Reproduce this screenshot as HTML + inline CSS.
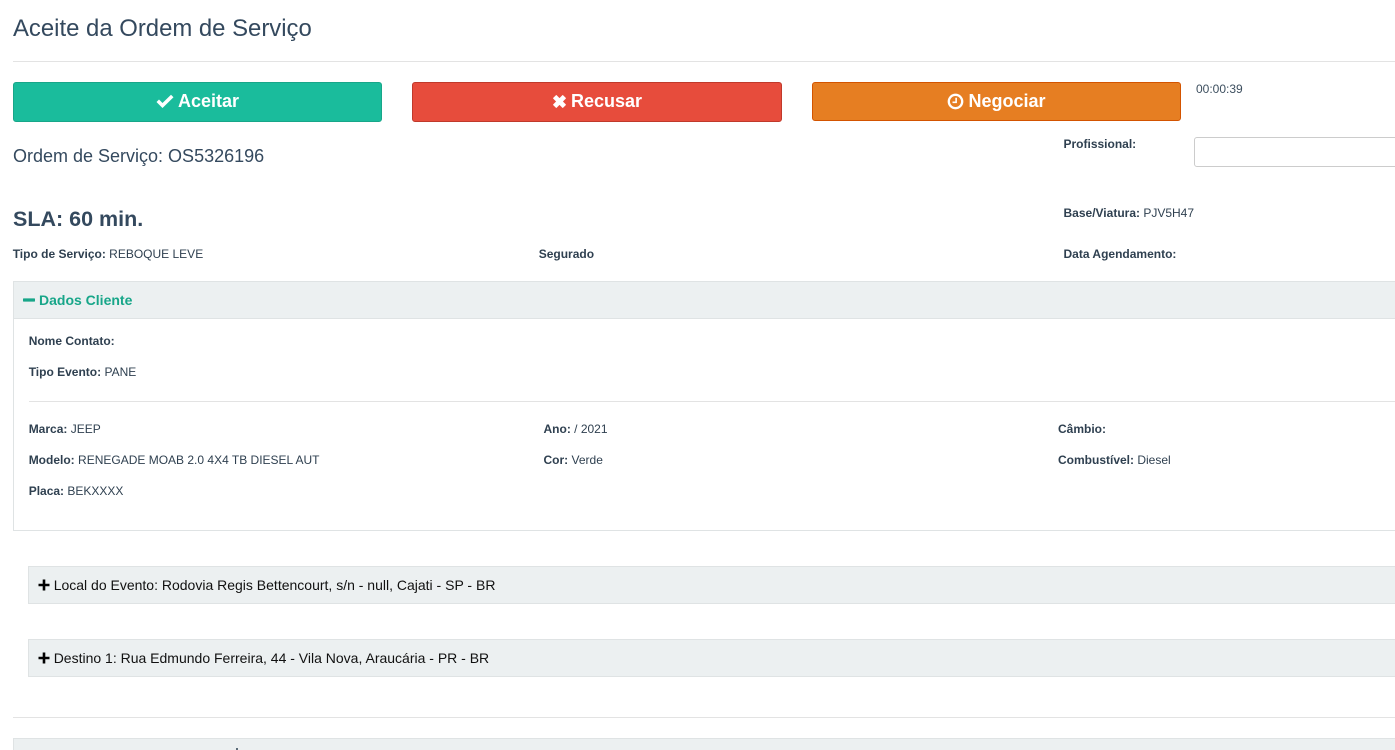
<!DOCTYPE html>
<html lang="pt-BR">
<head>
<meta charset="utf-8">
<title>Aceite da Ordem de Serviço</title>
<style>
html,body{margin:0;padding:0;width:1395px;height:750px;overflow:hidden;background:#fff}
body{font-family:"Liberation Sans",Arial,sans-serif;color:#2f4050;position:relative}
.a{position:absolute;white-space:nowrap}
.s{font-size:12px;line-height:16px}
b{font-weight:700}
.line{position:absolute;height:1px;background:#e3e3e3}
.btn{position:absolute;box-sizing:border-box;border-radius:3px;color:#fff;font-weight:700;font-size:18px;display:flex;align-items:center;justify-content:center;gap:4px;border-style:solid;border-width:1px;padding-bottom:2px}
.bar{position:absolute;box-sizing:border-box;background:#ecf0f1;border:1px solid #dfe3e4;right:-5px}
</style>
</head>
<body>
<div class="a" style="left:13px;top:15px;font-size:23.9px;line-height:28px;color:#34495e">Aceite da Ordem de Serviço</div>
<div class="line" style="left:13px;top:61px;width:1382px"></div>

<div class="btn" style="left:13px;top:82px;width:369px;height:40px;background:#1abc9c;border-color:#18a689">
<svg width="18" height="15" viewBox="0 0 18 15"><path d="M0.5 8 L3 5.5 L6.5 9 L15 0.8 L17.5 3.3 L6.5 14 Z" fill="#fff"/></svg><span>Aceitar</span></div>
<div class="btn" style="left:412px;top:82px;width:370px;height:40px;background:#e74c3c;border-color:#c0392b">
<svg width="15" height="15" viewBox="0 0 14 14"><path d="M1.5 4 L4 1.5 L7 4.5 L10 1.5 L12.5 4 L9.5 7 L12.5 10 L10 12.5 L7 9.5 L4 12.5 L1.5 10 L4.5 7 Z" fill="#fff" stroke="#fff" stroke-width="1" stroke-linejoin="round"/></svg><span>Recusar</span></div>
<div class="btn" style="left:812px;top:82px;width:369px;height:39px;background:#e67e22;border-color:#d35400;padding-bottom:0">
<svg width="17" height="17" viewBox="0 0 16 16"><circle cx="8" cy="8" r="6.3" fill="none" stroke="#fff" stroke-width="2.2"/><path d="M8.6 4.5 V8.8 H5.2" fill="none" stroke="#fff" stroke-width="1.5"/></svg><span>Negociar</span></div>

<div class="a s" style="left:1196px;top:81px;color:#3d4f5f">00:00:39</div>
<div class="a" style="left:13px;top:145px;font-size:18px;line-height:22px;color:#34495e">Ordem de Serviço: OS5326196</div>
<div class="a s" style="left:1063.5px;top:136px"><b>Profissional:</b></div>
<div class="a" style="left:1194px;top:137px;width:210px;height:30px;box-sizing:border-box;border:1px solid #ccc;border-radius:3px;background:#fff"></div>

<div class="a" style="left:13px;top:206px;font-size:21.5px;line-height:26px;color:#34495e"><b>SLA: 60 min.</b></div>
<div class="a s" style="left:1063.5px;top:205px"><b>Base/Viatura:</b> PJV5H47</div>
<div class="a s" style="left:12.7px;top:246px"><b>Tipo de Serviço:</b> REBOQUE LEVE</div>
<div class="a s" style="left:538.7px;top:246px"><b>Segurado</b></div>
<div class="a s" style="left:1063.5px;top:246px"><b>Data Agendamento:</b></div>

<div class="a" style="left:13px;top:281px;width:1392px;height:250px;box-sizing:border-box;border:1px solid #dfe3e4"></div>
<div class="bar" style="left:13px;top:281px;height:38px"></div>
<svg class="a" style="left:23px;top:298px" width="12" height="4" viewBox="0 0 12 4"><rect width="12" height="3.2" y=".4" rx=".6" fill="#18a689"/></svg>
<div class="a" style="left:39px;top:292px;font-size:14px;line-height:16px;color:#18a689"><b>Dados Cliente</b></div>

<div class="a s" style="left:28.7px;top:333px"><b>Nome Contato:</b></div>
<div class="a s" style="left:28.7px;top:364px"><b>Tipo Evento:</b> PANE</div>
<div class="line" style="left:29px;top:401px;width:1366px"></div>

<div class="a s" style="left:28.7px;top:421px"><b>Marca:</b> JEEP</div>
<div class="a s" style="left:28.7px;top:452px"><b>Modelo:</b> RENEGADE MOAB 2.0 4X4 TB DIESEL AUT</div>
<div class="a s" style="left:28.7px;top:483px"><b>Placa:</b> BEKXXXX</div>
<div class="a s" style="left:543.5px;top:421px"><b>Ano:</b> / 2021</div>
<div class="a s" style="left:543.5px;top:452px"><b>Cor:</b> Verde</div>
<div class="a s" style="left:1058px;top:421px"><b>Câmbio:</b></div>
<div class="a s" style="left:1058px;top:452px"><b>Combustível:</b> Diesel</div>

<div class="bar" style="left:28px;top:566px;height:38px"></div>
<svg class="a" style="left:38px;top:579px" width="12" height="12" viewBox="0 0 12 12"><path d="M4.7 0.5 H7.3 V4.7 H11.5 V7.3 H7.3 V11.5 H4.7 V7.3 H0.5 V4.7 H4.7 Z" fill="#000"/></svg>
<div class="a" style="left:53.7px;top:577px;font-size:14px;line-height:16px;color:#111">Local do Evento: Rodovia Regis Bettencourt, s/n - null, Cajati - SP - BR</div>

<div class="bar" style="left:28px;top:639px;height:38px"></div>
<svg class="a" style="left:38px;top:652px" width="12" height="12" viewBox="0 0 12 12"><path d="M4.7 0.5 H7.3 V4.7 H11.5 V7.3 H7.3 V11.5 H4.7 V7.3 H0.5 V4.7 H4.7 Z" fill="#000"/></svg>
<div class="a" style="left:53.7px;top:650px;font-size:14px;line-height:16px;color:#111">Destino 1: Rua Edmundo Ferreira, 44 - Vila Nova, Araucária - PR - BR</div>

<div class="line" style="left:13px;top:717px;width:1382px"></div>
<div class="bar" style="left:13px;top:738px;height:38px"></div>
<div class="a" style="left:236px;top:748px;width:2px;height:2px;background:#5a6b78"></div>
</body>
</html>
